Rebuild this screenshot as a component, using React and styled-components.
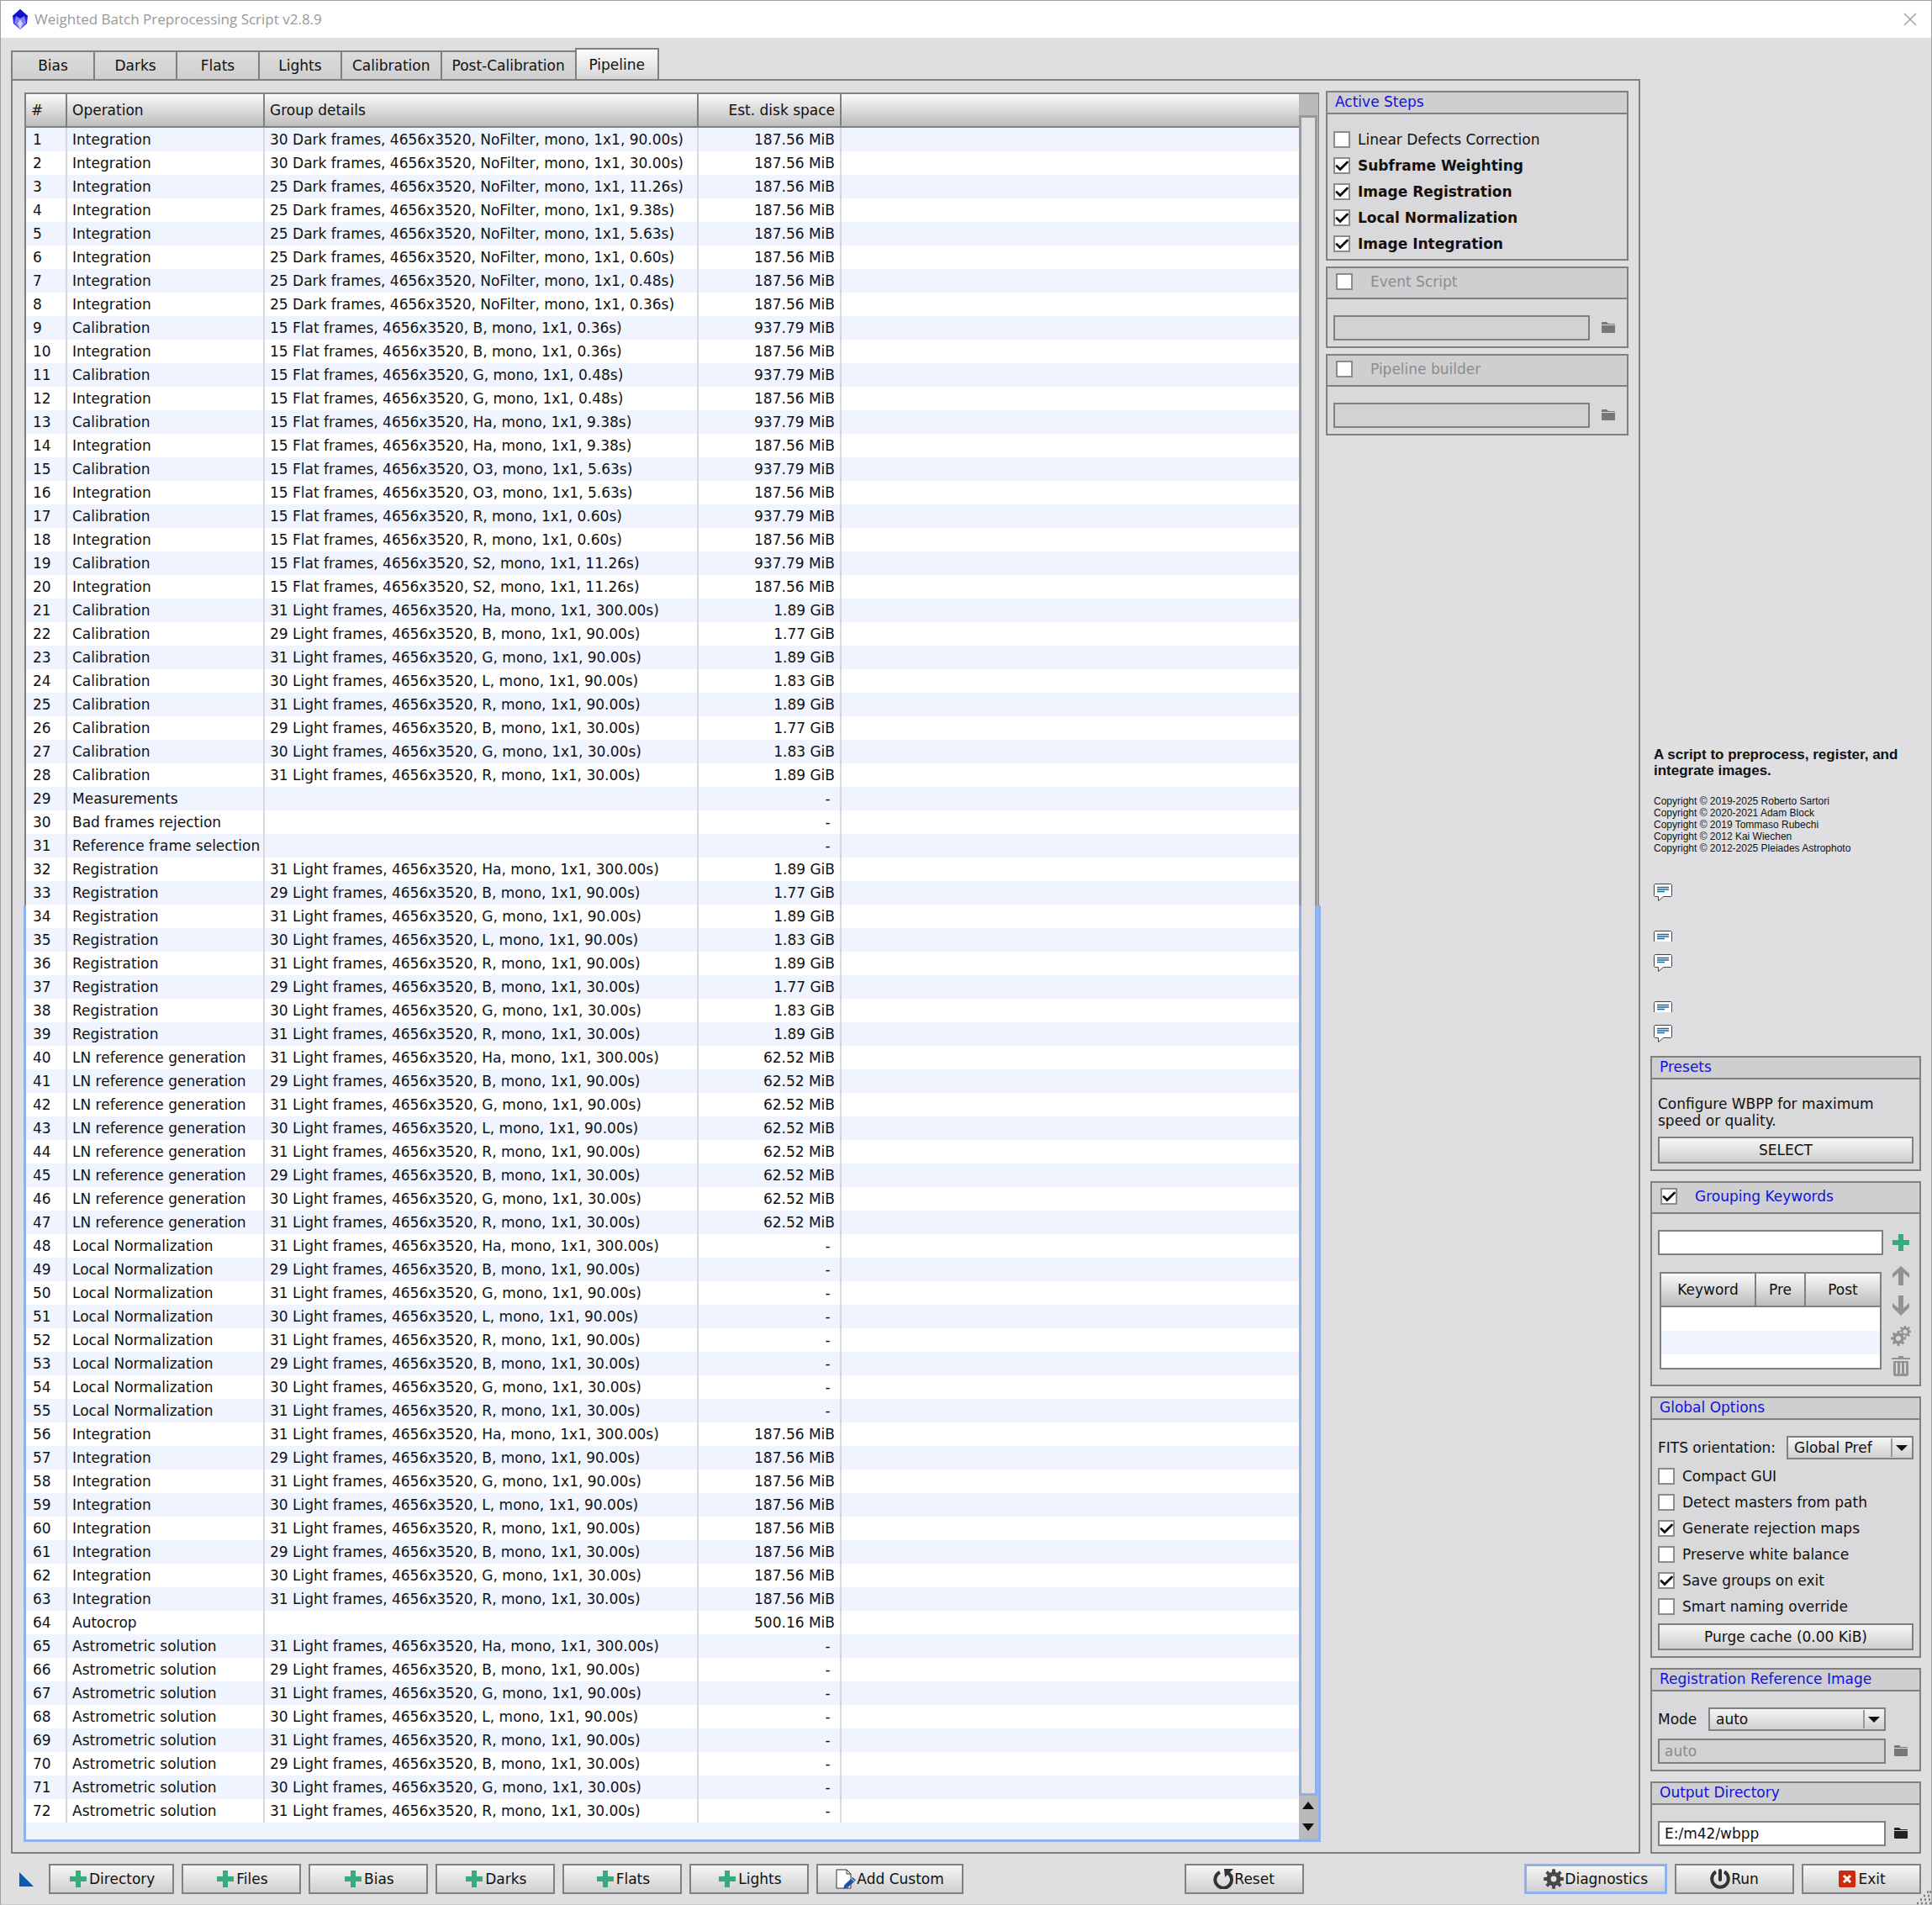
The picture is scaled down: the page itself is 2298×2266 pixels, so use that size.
import React from "react";
import styled, { createGlobalStyle } from "styled-components";

const lightGroups = [
  "31 Light frames, 4656x3520, Ha, mono, 1x1, 300.00s)",
  "29 Light frames, 4656x3520, B, mono, 1x1, 90.00s)",
  "31 Light frames, 4656x3520, G, mono, 1x1, 90.00s)",
  "30 Light frames, 4656x3520, L, mono, 1x1, 90.00s)",
  "31 Light frames, 4656x3520, R, mono, 1x1, 90.00s)",
  "29 Light frames, 4656x3520, B, mono, 1x1, 30.00s)",
  "30 Light frames, 4656x3520, G, mono, 1x1, 30.00s)",
  "31 Light frames, 4656x3520, R, mono, 1x1, 30.00s)",
];

const lightSizes = [
  "1.89 GiB", "1.77 GiB", "1.89 GiB", "1.83 GiB",
  "1.89 GiB", "1.77 GiB", "1.83 GiB", "1.89 GiB",
];

const darks = [
  "30 Dark frames, 4656x3520, NoFilter, mono, 1x1, 90.00s)",
  "30 Dark frames, 4656x3520, NoFilter, mono, 1x1, 30.00s)",
  "25 Dark frames, 4656x3520, NoFilter, mono, 1x1, 11.26s)",
  "25 Dark frames, 4656x3520, NoFilter, mono, 1x1, 9.38s)",
  "25 Dark frames, 4656x3520, NoFilter, mono, 1x1, 5.63s)",
  "25 Dark frames, 4656x3520, NoFilter, mono, 1x1, 0.60s)",
  "25 Dark frames, 4656x3520, NoFilter, mono, 1x1, 0.48s)",
  "25 Dark frames, 4656x3520, NoFilter, mono, 1x1, 0.36s)",
];

const flats = [
  "15 Flat frames, 4656x3520, B, mono, 1x1, 0.36s)",
  "15 Flat frames, 4656x3520, G, mono, 1x1, 0.48s)",
  "15 Flat frames, 4656x3520, Ha, mono, 1x1, 9.38s)",
  "15 Flat frames, 4656x3520, O3, mono, 1x1, 5.63s)",
  "15 Flat frames, 4656x3520, R, mono, 1x1, 0.60s)",
  "15 Flat frames, 4656x3520, S2, mono, 1x1, 11.26s)",
];

const NONE = "-\u00a0";

const forLights = (operation, size) =>
  lightGroups.map((group, i) => [operation, group, Array.isArray(size) ? size[i] : size]);

const steps = [
  ...darks.map((group) => ["Integration", group, "187.56 MiB"]),
  ...flats.flatMap((group) => [
    ["Calibration", group, "937.79 MiB"],
    ["Integration", group, "187.56 MiB"],
  ]),
  ...forLights("Calibration", lightSizes),
  ["Measurements", "", NONE],
  ["Bad frames rejection", "", NONE],
  ["Reference frame selection", "", NONE],
  ...forLights("Registration", lightSizes),
  ...forLights("LN reference generation", "62.52 MiB"),
  ...forLights("Local Normalization", NONE),
  ...forLights("Integration", "187.56 MiB"),
  ["Autocrop", "", "500.16 MiB"],
  ...forLights("Astrometric solution", NONE),
];

const tabs = ["Bias", "Darks", "Flats", "Lights", "Calibration", "Post-Calibration", "Pipeline"];

const activeSteps = [
  ["Linear Defects Correction", false],
  ["Subframe Weighting", true],
  ["Image Registration", true],
  ["Local Normalization", true],
  ["Image Integration", true],
];

const globalOptions = [
  ["Compact GUI", false],
  ["Detect masters from path", false],
  ["Generate rejection maps", true],
  ["Preserve white balance", false],
  ["Save groups on exit", true],
  ["Smart naming override", false],
];

/* icons */

const LogoIcon = () => (
  <svg width="20" height="26" viewBox="0 0 20 26">
    <path d="M10 1 L19 9 L18 18 L10 25 L2 18 L1 9 Z" fill="#2424e8" />
    <path d="M10 1 L19 9 L10 13 L1 9 Z" fill="#1010c8" />
    <path d="M10 12 L15 9 L17 17 L10 25 L3 17 L5 9 Z" fill="#7d7df6" />
    <path d="M10 13 L13 18 L10 25 L7 18 Z" fill="#d5d5ff" />
  </svg>
);

const CloseIcon = () => (
  <svg width="16" height="16" viewBox="0 0 16 16">
    <path d="M1 1 L15 15 M15 1 L1 15" stroke="#999" strokeWidth="1.3" />
  </svg>
);

const PlusIcon = () => (
  <svg width="24" height="24" viewBox="0 0 24 24">
    <path d="M9 2h6v7h7v6h-7v7H9v-7H2V9h7z" fill="#38ab7c" />
  </svg>
);

const FolderIcon = ({ color }) => (
  <svg width="24" height="24" viewBox="0 0 24 24">
    <path d="M4 6 Q4 5 5 5 H10 L12 7 H19 Q20 7 20 8 H4 Z" fill={color} />
    <path d="M4 9 H20 V17 Q20 18 19 18 H5 Q4 18 4 17 Z" fill={color} />
  </svg>
);

const ArrowIcon = ({ down }) => (
  <svg width="24" height="24" viewBox="0 0 24 24">
    <path
      d={down ? "M9 0h6v15l7-6v5L12 24 2 14V9l7 6z" : "M9 24h6V9l7 6v-5L12 1 2 10v5l7-6z"}
      fill="#929292"
    />
  </svg>
);

const gearPath = (cx, cy, r, teeth, depth) => {
  const points = [];
  for (let i = 0; i < teeth; i++) {
    [[-0.3, r - depth], [-0.2, r], [0.2, r], [0.3, r - depth]].forEach(([o, radius]) => {
      const a = ((i + o) * 2 * Math.PI) / teeth;
      points.push(`${(cx + radius * Math.sin(a)).toFixed(2)} ${(cy - radius * Math.cos(a)).toFixed(2)}`);
    });
  }
  return `M${points.join("L")}Z`;
};

const ring = (cx, cy, r) =>
  `M${cx - r} ${cy}a${r} ${r} 0 1 0 ${2 * r} 0a${r} ${r} 0 1 0 ${-2 * r} 0Z`;

const GearIcon = () => (
  <svg width="24" height="24" viewBox="0 0 24 24">
    <path d={gearPath(12, 12, 12, 8, 3.4) + ring(12, 12, 3.4)} fill="#484848" fillRule="evenodd" />
  </svg>
);

const GearsIcon = () => (
  <svg width="24" height="24" viewBox="0 0 24 24">
    <path d={gearPath(17, 7, 7.5, 8, 2.2) + ring(17, 7, 2.6)} fill="#929292" fillRule="evenodd" />
    <circle cx="9" cy="15" r="8.6" fill="#d9d9db" />
    <path d={gearPath(9, 15, 9, 8, 2.4) + ring(9, 15, 3)} fill="#929292" fillRule="evenodd" />
  </svg>
);

const TrashIcon = () => (
  <svg width="24" height="24" viewBox="0 0 24 24">
    <path d="M9 2 V0 H15 V2 H23 V4 H1 V2 Z" fill="#929292" />
    <path
      d="M3 6 H21 V22 Q21 24 19 24 H5 Q3 24 3 22 Z M6 8 V21 H8 V8 Z M11 8 V21 H13 V8 Z M16 8 V21 H18 V8 Z"
      fill="#929292"
      fillRule="evenodd"
    />
  </svg>
);

const ResetIcon = () => (
  <svg width="24" height="24" viewBox="0 0 24 24">
    <path d="M8 4 A9.8 9.8 0 1 0 20 7" fill="none" stroke="#333" strokeWidth="4" />
    <path d="M13 0 H24 L20 4 L24 9 L20 10 L17 7 L14 10 Z" fill="#333" />
  </svg>
);

const PowerIcon = () => (
  <svg width="24" height="24" viewBox="0 0 24 24">
    <path d="M7 3.5 A9.8 9.8 0 1 0 17 3.5" fill="none" stroke="#333" strokeWidth="4" />
    <path d="M12 2 V13" stroke="#333" strokeWidth="4" strokeLinecap="round" />
  </svg>
);

const ExitIcon = () => (
  <svg width="24" height="24" viewBox="0 0 24 24">
    <rect x="2" y="2" width="20" height="20" rx="2" fill="#cf2a0e" />
    <path d="M8 8 L16 16 M16 8 L8 16" stroke="#fff" strokeWidth="3" />
  </svg>
);

const DocumentIcon = () => (
  <svg width="24" height="24" viewBox="0 0 24 24">
    <path d="M1 1 H13 L18 6 V23 H1 Z" fill="#fff" stroke="#333" />
    <path d="M13 1 V6 H18" fill="none" stroke="#333" />
    <path d="M9 24 L10.5 19 L20 10 L24 13.5 L14 22.5 Z" fill="#1f55a8" />
    <path d="M18.5 11.5 L22.5 15" stroke="#fff" />
  </svg>
);

const BubbleIcon = ({ cut }) => (
  <svg width="22" height={cut ? 13 : 21} viewBox={cut ? "0 0 22 13" : "0 0 22 21"}>
    <path
      d="M1.5 0.5 H20.5 L21.5 1.5 V14.5 L20.5 15.5 H11.5 L5.5 20.5 V15.5 H1.5 L0.5 14.5 V1.5 Z"
      fill="#fff"
      stroke="#444"
    />
    <path d="M4 4.5 H18 M4 7 H18 M4 9.5 H13" stroke="#176a98" strokeWidth="1.4" />
  </svg>
);

const TriangleIcon = () => (
  <svg width="17" height="17" viewBox="0 0 17 17">
    <path d="M0 0 L17 17 H0 Z" fill="#0a5ab5" />
  </svg>
);

const GripIcon = () => (
  <svg width="18" height="18" viewBox="0 0 18 18">
    <path
      d="M1 17h2M6 17h2M11 17h2M16 17h2M5 12.5h2M10 12.5h2M15 12.5h2M9 8h2M14 8h2M13 3.5h2M16 3.5h2"
      stroke="#777"
      strokeWidth="2.4"
    />
  </svg>
);

const DropArrow = () => (
  <svg width="28" height="24" viewBox="0 0 28 24">
    <path d="M2 1 V23" stroke="#999" strokeWidth="2" />
    <path d="M7 9 H21 L14 16 Z" fill="#111" />
  </svg>
);

const Check = ({ label, checked, bold }) => (
  <CheckLabel $bold={bold}>
    <CheckBox type="checkbox" defaultChecked={checked} />
    {label}
  </CheckLabel>
);

const CheckGroup = ({ title, checked, disabled, children }) => (
  <Group>
    <GroupCheckTitle $disabled={disabled}>
      <CheckBox type="checkbox" defaultChecked={checked} />
      {title}
    </GroupCheckTitle>
    <GroupBody>{children}</GroupBody>
  </Group>
);

const TitledGroup = ({ title, children }) => (
  <Group>
    <GroupTitle>{title}</GroupTitle>
    <GroupBody>{children}</GroupBody>
  </Group>
);

const PipelineTable = () => (
  <TableFrame>
    <TableArea>
      <StepsTable>
        <colgroup>
          <col width="49" />
          <col width="235" />
          <col width="516" />
          <col width="170" />
          <col />
        </colgroup>
        <thead>
          <tr>
            <HeadCell>#</HeadCell>
            <HeadCell>Operation</HeadCell>
            <HeadCell>Group details</HeadCell>
            <HeadCell $align="right">Est. disk space</HeadCell>
            <HeadCell $last />
          </tr>
        </thead>
        <tbody>
          {steps.map(([operation, group, size], i) => (
            <StepRow key={i}>
              <Cell>{i + 1}</Cell>
              <Cell>{operation}</Cell>
              <Cell>{group}</Cell>
              <Cell $align="right">{size}</Cell>
              <Cell $last />
            </StepRow>
          ))}
        </tbody>
      </StepsTable>
    </TableArea>
    <ScrollBar>
      <ScrollThumb><div /></ScrollThumb>
      <ScrollArrows>
        <svg width="14" height="9" viewBox="0 0 14 9"><path d="M7 0 L14 9 H0 Z" fill="#111" /></svg>
        <svg width="14" height="9" viewBox="0 0 14 9"><path d="M0 0 H14 L7 9 Z" fill="#111" /></svg>
      </ScrollArrows>
    </ScrollBar>
  </TableFrame>
);

const App = () => {
  return (
    <Window>
      <GlobalStyle />
      <TitleBar>
        <LogoIcon />
        <WindowTitle>Weighted Batch Preprocessing Script v2.8.9</WindowTitle>
        <IconButton aria-label="Close"><CloseIcon /></IconButton>
      </TitleBar>

      <Body>
        <Main>
          <TabBar role="tablist">
            {tabs.map((tab) => (
              <Tab key={tab} role="tab" $active={tab === "Pipeline"} aria-selected={tab === "Pipeline"}>
                {tab}
              </Tab>
            ))}
          </TabBar>
          <Panel>
            <PipelineTable />
            <StepsColumn>
              <TitledGroup title="Active Steps">
                <CheckList $inset>
                  {activeSteps.map(([label, checked]) => (
                    <Check key={label} label={label} checked={checked} bold={checked} />
                  ))}
                </CheckList>
              </TitledGroup>
              <CheckGroup title="Event Script" disabled>
                <FieldRow $gap={7}>
                  <TextField aria-label="Event script" disabled />
                  <IconButton aria-label="Browse event script" disabled><FolderIcon color="#777" /></IconButton>
                </FieldRow>
              </CheckGroup>
              <CheckGroup title="Pipeline builder" disabled>
                <FieldRow $gap={7}>
                  <TextField aria-label="Pipeline builder script" disabled />
                  <IconButton aria-label="Browse pipeline builder" disabled><FolderIcon color="#777" /></IconButton>
                </FieldRow>
              </CheckGroup>
            </StepsColumn>
          </Panel>
        </Main>

        <SideBar>
          <About>
            <AboutTitle>A script to preprocess, register, and integrate images.</AboutTitle>
            <AboutCredits>
              Copyright © 2019-2025 Roberto Sartori<br />
              Copyright © 2020-2021 Adam Block<br />
              Copyright © 2019 Tommaso Rubechi<br />
              Copyright © 2012 Kai Wiechen<br />
              Copyright © 2012-2025 Pleiades Astrophoto
            </AboutCredits>
            <Notes>
              <BubbleIcon />
              <NotePair>
                <BubbleIcon cut />
                <BubbleIcon />
              </NotePair>
              <NotePair>
                <BubbleIcon cut />
                <BubbleIcon />
              </NotePair>
            </Notes>
          </About>

          <Groups>
            <TitledGroup title="Presets">
              <Description>Configure WBPP for maximum speed or quality.</Description>
              <WideButton>SELECT</WideButton>
            </TitledGroup>

            <CheckGroup title="Grouping Keywords" checked>
              <KeywordGrid>
                <KeywordColumn>
                  <TextField aria-label="Keyword" />
                  <KeywordTable>
                    <colgroup>
                      <col width="113" />
                      <col width="59" />
                      <col />
                    </colgroup>
                    <thead>
                      <tr>
                        <HeadCell $align="center">Keyword</HeadCell>
                        <HeadCell $align="center">Pre</HeadCell>
                        <HeadCell $align="center" $last>Post</HeadCell>
                      </tr>
                    </thead>
                    <tbody>
                      <tr><td colSpan="3" /></tr>
                      <tr><td colSpan="3" /></tr>
                      <tr><td colSpan="3" /></tr>
                    </tbody>
                  </KeywordTable>
                </KeywordColumn>
                <KeywordTools>
                  <IconButton aria-label="Add keyword"><PlusIcon /></IconButton>
                  <IconButton aria-label="Move up"><ArrowIcon /></IconButton>
                  <IconButton aria-label="Move down"><ArrowIcon down /></IconButton>
                  <IconButton aria-label="Keyword settings"><GearsIcon /></IconButton>
                  <IconButton aria-label="Remove keyword"><TrashIcon /></IconButton>
                </KeywordTools>
              </KeywordGrid>
            </CheckGroup>

            <TitledGroup title="Global Options">
              <SelectRow>
                <label htmlFor="orientation">FITS orientation:</label>
                <SelectBox $width={151}>
                  <select id="orientation">
                    <option>Global Pref</option>
                  </select>
                  <DropArrow />
                </SelectBox>
              </SelectRow>
              <CheckList>
                {globalOptions.map(([label, checked]) => (
                  <Check key={label} label={label} checked={checked} />
                ))}
              </CheckList>
              <WideButton>Purge cache (0.00 KiB)</WideButton>
            </TitledGroup>

            <TitledGroup title="Registration Reference Image">
              <SelectRow $short>
                <label htmlFor="mode">Mode</label>
                <SelectBox $width={211}>
                  <select id="mode">
                    <option>auto</option>
                  </select>
                  <DropArrow />
                </SelectBox>
              </SelectRow>
              <FieldRow $gap={3} $spaced>
                <TextField aria-label="Reference image" defaultValue="auto" disabled />
                <IconButton aria-label="Browse reference image" disabled><FolderIcon color="#777" /></IconButton>
              </FieldRow>
            </TitledGroup>

            <TitledGroup title="Output Directory">
              <FieldRow $gap={3}>
                <TextField aria-label="Output directory" defaultValue="E:/m42/wbpp" />
                <IconButton aria-label="Browse output directory"><FolderIcon color="#222" /></IconButton>
              </FieldRow>
            </TitledGroup>
          </Groups>
        </SideBar>
      </Body>

      <Footer>
        <TriangleIcon />
        <AddButtons>
          <Button><PlusIcon />Directory</Button>
          <Button><PlusIcon />Files</Button>
          <Button><PlusIcon />Bias</Button>
          <Button><PlusIcon />Darks</Button>
          <Button><PlusIcon />Flats</Button>
          <Button><PlusIcon />Lights</Button>
          <Button><DocumentIcon />Add Custom</Button>
        </AddButtons>
        <Button><ResetIcon />Reset</Button>
        <RunButtons>
          <Button $focused><GearIcon />Diagnostics</Button>
          <Button><PowerIcon />Run</Button>
          <Button><ExitIcon />Exit</Button>
        </RunButtons>
        <Grip><GripIcon /></Grip>
      </Footer>
    </Window>
  );
};

export default App;

const GlobalStyle = createGlobalStyle`
  * {
    box-sizing: border-box;
  }

  body {
    margin: 0;
    background: #dfdfe1;
  }

  body, button, input, select {
    font-family: "DejaVu Sans", sans-serif;
    font-size: 17px;
    line-height: 20px;
    color: #111;
  }

  svg {
    display: block;
    flex-shrink: 0;
  }
`;

const Window = styled.div`
  min-height: 100vh;
  display: flex;
  flex-direction: column;
  border: 1px solid #a0a0a0;
  border-bottom-color: #c8c8c8;
  background: #dfdfe1;
`;

const TitleBar = styled.header`
  height: 44px;
  display: flex;
  align-items: center;
  padding: 0 10px 0 13px;
  gap: 7px;
  background: #fff;
`;

const WindowTitle = styled.div`
  flex: 1;
  font-family: "Open Sans", sans-serif;
  font-size: 17px;
  color: #999;
`;

const Body = styled.div`
  flex: 1;
  display: flex;
  gap: 12px;
  padding: 12px 12px 0;
`;

const Main = styled.main`
  flex: 1;
  min-width: 0;
  display: flex;
  flex-direction: column;
`;

const TabBar = styled.div`
  display: flex;
  align-items: flex-end;
`;

const Tab = styled.button`
  min-width: 100px;
  height: ${(p) => (p.$active ? 37 : 34)}px;
  margin-right: -2px;
  padding: 0 12px;
  border: 2px solid #808080;
  border-bottom: none;
  background: ${(p) =>
    p.$active
      ? "linear-gradient(#fdfdfd, #d6d6d6)"
      : "linear-gradient(#dcdcdd, #cfcfd0)"};
`;

const Panel = styled.div`
  flex: 1;
  display: flex;
  align-items: stretch;
  gap: 6px;
  padding: 12px 12px 12px 13px;
  border: 2px solid #808080;
`;

/* the focus frame is repainted only on the lower part of the list */
const TableFrame = styled.div`
  flex: 1;
  min-width: 0;
  display: flex;
  padding: 4px 3px 3px;
  background:
    linear-gradient(#808080, #808080) 1px 2px / calc(100% - 3px) 967px no-repeat,
    linear-gradient(#8eb1ee, #8eb1ee) 0 969px / 100% 100% no-repeat;
`;

const TableArea = styled.div`
  flex: 1;
  min-width: 0;
  padding-bottom: 20px;
  background: #f0f4ff;
`;

const StepsTable = styled.table`
  width: 100%;
  table-layout: fixed;
  border-collapse: separate;
  border-spacing: 0;
`;

const HeadCell = styled.th`
  height: 40px;
  padding: 0 6px;
  border-right: ${(p) => (p.$last ? "none" : "2px solid #808080")};
  border-bottom: 2px solid #808080;
  background: linear-gradient(#fafafa, #bcbcbc);
  font-weight: normal;
  text-align: ${(p) => p.$align || "left"};
`;

const StepRow = styled.tr`
  background: #fff;

  &:nth-child(odd) {
    background: #f0f4ff;
  }
`;

const Cell = styled.td`
  height: 28px;
  padding: 0 6px;
  border-right: ${(p) => (p.$last ? "none" : "2px solid #d8d8da")};
  white-space: nowrap;
  text-align: ${(p) => p.$align || "left"};

  &:first-child {
    padding-left: 8px;
  }
`;

const ScrollBar = styled.div`
  width: 23px;
  display: flex;
  flex-direction: column;
  padding: 25px 1px 0 0;
  background: #bababa;
`;

const ScrollThumb = styled.div`
  flex: 1;
  display: flex;
  padding: 3px;
  background: linear-gradient(#999 940px, #8eb1ee 940px);

  div {
    flex: 1;
    background: #e0e0e0;
  }
`;

const ScrollArrows = styled.div`
  height: 52px;
  display: flex;
  flex-direction: column;
  align-items: center;
  justify-content: space-between;
  padding: 7px 0 10px;
`;

const StepsColumn = styled.div`
  width: 360px;
  display: flex;
  flex-direction: column;
  gap: 7px;
`;

const Group = styled.section`
  border: 2px solid #808080;
  background: #d9d9db;
`;

const GroupTitle = styled.div`
  height: 26px;
  padding: 1px 9px 0;
  border-bottom: 2px solid #808080;
  background: #cfcfd1;
  color: #1212dc;
`;

const GroupCheckTitle = styled.label`
  height: 37px;
  display: flex;
  align-items: center;
  gap: 21px;
  padding: 0 10px 3px;
  border-bottom: 2px solid #808080;
  background: #cfcfd1;
  color: ${(p) => (p.$disabled ? "#8c8c8c" : "#1212dc")};
`;

const GroupBody = styled.div`
  padding: 19px 7px 7px;
`;

const CheckList = styled.div`
  margin: ${(p) => (p.$inset ? "-5px 0 -4px" : "4px 0 5px")};
`;

const CheckLabel = styled.label`
  height: 31px;
  display: flex;
  align-items: center;
  gap: 9px;
  font-weight: ${(p) => (p.$bold ? "bold" : "normal")};
`;

const CheckBox = styled.input`
  appearance: none;
  width: 20px;
  height: 20px;
  flex-shrink: 0;
  margin: 0;
  border: 2px solid #8c8c8c;
  background: #fff;

  &:checked {
    background: #fff url("data:image/svg+xml,%3Csvg xmlns='http://www.w3.org/2000/svg' viewBox='0 0 16 16'%3E%3Cpath d='M2 8.5 L6 12.5 L14.5 4' fill='none' stroke='%23111' stroke-width='2.8' stroke-linecap='round'/%3E%3C/svg%3E") center / 16px 16px no-repeat;
  }
`;

const TextField = styled.input`
  width: 100%;
  min-width: 0;
  height: 30px;
  padding: 0 6px;
  border: 2px solid #808080;
  background: #fff;

  &:disabled {
    background: #d2d2d2;
    color: #8c8c8c;
  }
`;

const IconButton = styled.button`
  width: 30px;
  height: 30px;
  flex-shrink: 0;
  display: flex;
  align-items: center;
  justify-content: center;
  padding: 0;
  border: none;
  background: none;
`;

const FieldRow = styled.div`
  display: flex;
  gap: ${(p) => p.$gap}px;
  margin-top: ${(p) => (p.$spaced ? 9 : 0)}px;
`;

const SideBar = styled.aside`
  width: 322px;
  display: flex;
  flex-direction: column;
  justify-content: flex-end;
`;

const About = styled.div`
  padding: 0 4px;
  margin-bottom: 16px;
  font-family: "Liberation Sans", Arial, sans-serif;
`;

const AboutTitle = styled.div`
  font-size: 17px;
  line-height: 19px;
  font-weight: bold;
`;

const AboutCredits = styled.div`
  margin: 20px 0 35px;
  font-size: 12px;
  line-height: 14px;
`;

const Notes = styled.div`
  display: flex;
  flex-direction: column;
  gap: 35px;
`;

const NotePair = styled.div`
  display: flex;
  flex-direction: column;
  gap: 15px;
`;

const Groups = styled.div`
  display: flex;
  flex-direction: column;
  gap: 12px;
`;

const Description = styled.p`
  margin: 0 0 9px;
`;

const Button = styled.button`
  min-width: 142px;
  height: 36px;
  display: flex;
  align-items: center;
  justify-content: center;
  gap: 1px;
  padding: 0 ${(p) => (p.$focused ? 20 : 21)}px;
  border: ${(p) => (p.$focused ? "3px solid #8eb1ee" : "2px solid #808080")};
  background: linear-gradient(#f6f6f6, #cfcfcf);
`;

const WideButton = styled(Button)`
  width: 100%;
  height: 32px;
`;

const KeywordGrid = styled.div`
  display: flex;
  gap: 6px;
  margin-bottom: -3px;
`;

const KeywordColumn = styled.div`
  flex: 1;
  min-width: 0;
`;

const KeywordTable = styled.table`
  width: calc(100% - 4px);
  margin: 20px 2px 0;
  table-layout: fixed;
  border: 2px solid #808080;
  border-collapse: separate;
  border-spacing: 0;
  background: #fff;

  td {
    height: 28px;
    padding: 0;
  }

  tr:nth-child(2) td {
    background: #f0f4ff;
  }

  tr:nth-child(3) td {
    height: 16px;
  }
`;

const KeywordTools = styled.div`
  display: flex;
  flex-direction: column;

  button:first-child {
    margin-bottom: 6px;
  }

  button + button {
    height: 36px;
  }
`;

const SelectRow = styled.div`
  display: flex;
  align-items: center;
  justify-content: space-between;
  padding-right: ${(p) => (p.$short ? 33 : 0)}px;
`;

const SelectBox = styled.div`
  width: ${(p) => p.$width}px;
  display: grid;
  align-items: center;

  select {
    grid-area: 1 / 1;
    height: 28px;
    appearance: none;
    padding: 0 30px 0 7px;
    border: 2px solid #808080;
    border-radius: 0;
    background: linear-gradient(#f6f6f6, #cfcfcf);
  }

  svg {
    grid-area: 1 / 1;
    justify-self: end;
    pointer-events: none;
  }
`;

const Footer = styled.footer`
  position: relative;
  display: flex;
  align-items: center;
  justify-content: space-between;
  padding: 12px 12px 12px 22px;
`;

const AddButtons = styled.div`
  display: flex;
  gap: 9px;
  margin-left: 18px;
  margin-right: auto;
`;

const RunButtons = styled.div`
  display: flex;
  gap: 9px;
  margin-left: auto;
`;

const Grip = styled.div`
  position: absolute;
  right: 0;
  bottom: 0;
`;
